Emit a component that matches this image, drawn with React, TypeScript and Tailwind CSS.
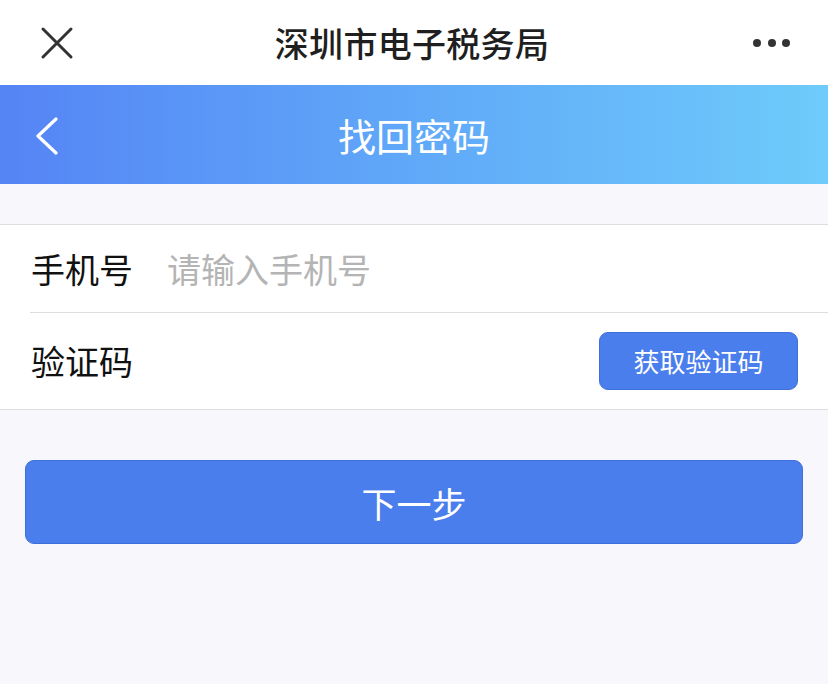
import React from "react";

const font = { fontFamily: '"Noto Sans CJK SC", "Noto Sans", sans-serif' };

export default function App() {
  return (
    <div className="w-[828px] h-[684px] bg-[#f8f8fc] flex flex-col" style={font}>
      {/* top bar */}
      <div className="h-[85px] bg-white flex items-center justify-between pl-[40px] pr-[38px]">
        <div className="w-[52px] flex items-center">
          <svg width="34" height="34" viewBox="0 0 34 34">
            <path d="M3 3 L31 31 M31 3 L3 31" stroke="#333" strokeWidth="3" strokeLinecap="round" />
          </svg>
        </div>
        <div className="text-[34px] font-medium text-[#1f1f1f] leading-none tracking-[0.3px] pr-[6px]">深圳市电子税务局</div>
        <div className="w-[52px] flex items-center justify-end gap-[6.5px]">
          <span className="w-[8px] h-[8px] rounded-full bg-[#333]" />
          <span className="w-[8px] h-[8px] rounded-full bg-[#333]" />
          <span className="w-[8px] h-[8px] rounded-full bg-[#333]" />
        </div>
      </div>
      {/* gradient header */}
      <div className="h-[99px] bg-gradient-to-r from-[#5584f5] to-[#6ecbfa] flex items-center relative">
        <div className="absolute left-[34px] top-[32px]">
          <svg width="26" height="38" viewBox="0 0 26 38">
            <path d="M22 2 L4 19 L22 36" stroke="#fff" strokeWidth="3.2" fill="none" strokeLinecap="round" strokeLinejoin="round" />
          </svg>
        </div>
        <div className="flex-1 text-center text-white text-[38px] leading-none">找回密码</div>
      </div>
      <div className="h-[40px]" />
      {/* form */}
      <div className="bg-white border-t border-b border-[#dddde0]">
        <div className="h-[87px] flex items-center pl-[31px]">
          <span className="text-[34px] text-[#111] leading-none w-[136px]">手机号</span>
          <span className="text-[34px] text-[#b4b4b4] leading-none">请输入手机号</span>
        </div>
        <div className="ml-[30px] h-px bg-[#dddde0]" />
        <div className="h-[96px] flex items-center justify-between pl-[31px] pr-[30px]">
          <span className="text-[34px] text-[#111] leading-none">验证码</span>
          <div className="w-[199px] h-[58px] rounded-[9px] bg-[#4a7eed] border border-[#3f6fd8] flex items-center justify-center text-white text-[26px] leading-none">
            获取验证码
          </div>
        </div>
      </div>
      <div className="px-[25px] pt-[50px]">
        <div className="h-[84px] rounded-[9px] bg-[#4a7eed] border border-[#3f6fd8] flex items-center justify-center text-white text-[35px] leading-none">
          下一步
        </div>
      </div>
    </div>
  );
}
